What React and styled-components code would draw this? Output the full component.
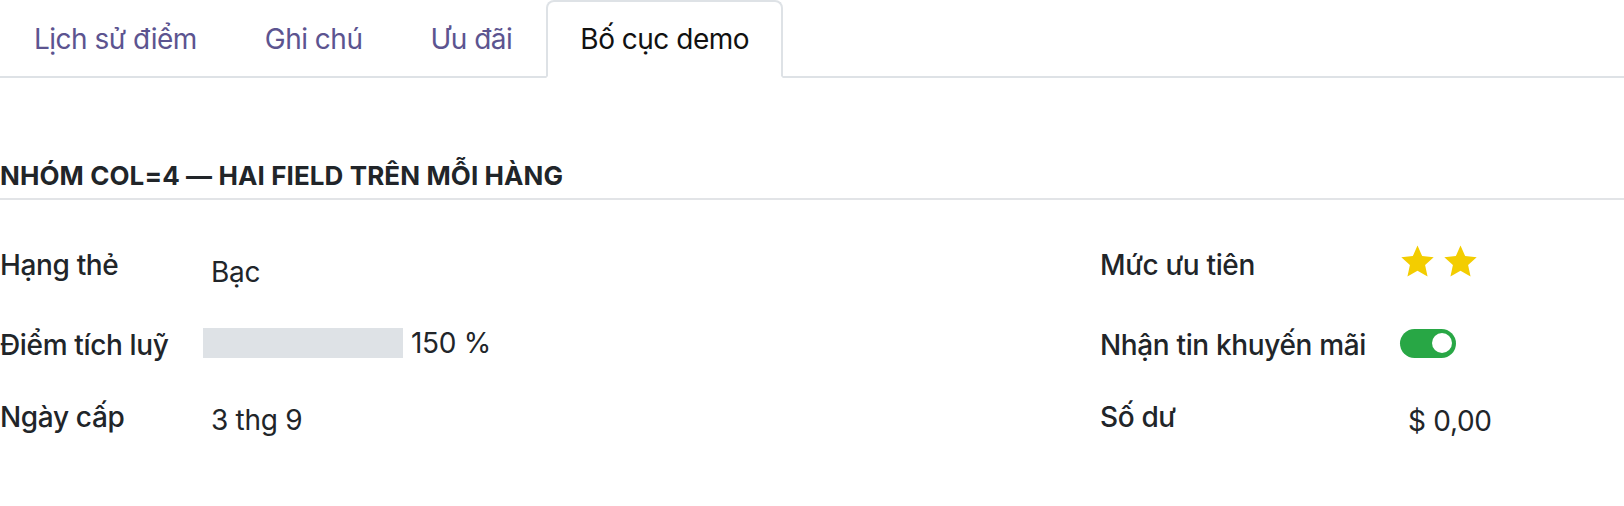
import React from "react";
import styled, { createGlobalStyle } from "styled-components";

const Global = createGlobalStyle`
  html, body { margin: 0; padding: 0; background: #fff; }
  body {
    font-family: Inter, "Noto Sans", Roboto, sans-serif;
    color: #212529;
    -webkit-font-smoothing: antialiased;
  }
`;

const Page = styled.div`
  width: 1624px;
  height: 506px;
  overflow: hidden;
  background: #fff;
`;

const TabBar = styled.nav`
  display: flex;
  align-items: flex-end;
  border-bottom: 2px solid #dee2e6;
  height: 76px;
`;

const Tab = styled.div`
  box-sizing: border-box;
  height: 78px;
  margin-bottom: -2px;
  padding: 16px 32px;
  font-size: 28px;
  line-height: 42px;
  letter-spacing: -0.5px;
  white-space: nowrap;
  border: 2px solid ${(p) => (p.$active ? "#dee2e6" : "transparent")};
  border-bottom-color: ${(p) => (p.$active ? "#fff" : "transparent")};
  border-radius: 8px 8px 0 0;
  background: ${(p) => (p.$active ? "#fff" : "transparent")};
  color: ${(p) => (p.$active ? "#111" : "#5c5490")};
`;

const Sheet = styled.section`
  padding-top: 80px;
`;

const Separator = styled.h2`
  margin: 0;
  font-size: 26px;
  line-height: 36px;
  font-weight: 700;
  letter-spacing: 0.1px;
  text-transform: uppercase;
  color: #212529;
  padding-bottom: 4px;
  border-bottom: 2px solid #e2e4e7;
`;

const Group = styled.div`
  margin-top: 44px;
  display: grid;
  grid-template-columns: 203px 897px 300px 1fr;
  grid-template-rows: 80px 72px 42px;
  align-items: start;
`;

const Label = styled.div`
  font-size: 28px;
  line-height: 42px;
  font-weight: 500;
  letter-spacing: -0.35px;
  color: #212529;
  white-space: nowrap;
`;

const Value = styled.div`
  display: flex;
  align-items: center;
  min-height: 42px;
  margin-top: ${(p) => p.$offset || 0}px;
  font-size: 28px;
  line-height: 42px;
  letter-spacing: -0.3px;
  color: #212529;
  white-space: nowrap;
`;

const Text = styled.span`
  padding-left: 8px;
`;

const Bar = styled.div`
  width: 200px;
  height: 30px;
  background: #dee2e6;
  margin-right: 8px;
`;

const Stars = styled.div`
  display: flex;
  gap: 8px;
`;

const Switch = styled.div`
  box-sizing: border-box;
  width: 56px;
  height: 29px;
  border-radius: 15px;
  background: #28a745;
  display: flex;
  align-items: center;
  justify-content: flex-end;
  padding-right: 4px;
`;

const Knob = styled.span`
  width: 20px;
  height: 20px;
  border-radius: 50%;
  background: #fff;
`;

const Star = () => (
  <svg width="35" height="34" viewBox="0 0 24 23.3">
    <polygon
      fill="#f3cd00"
      points="12,0.4 15.2,7.6 23.1,8.4 17.2,13.7 18.9,21.6 12,17.6 5.1,21.6 6.8,13.7 0.9,8.4 8.8,7.6"
    />
  </svg>
);

export default function App() {
  return (
    <Page>
      <Global />
      <TabBar>
        <Tab>Lịch sử điểm</Tab>
        <Tab>Ghi chú</Tab>
        <Tab>Ưu đãi</Tab>
        <Tab $active>Bố cục demo</Tab>
      </TabBar>
      <Sheet>
        <Separator>Nhóm col=4 — hai field trên mỗi hàng</Separator>
        <Group>
          <Label>Hạng thẻ</Label>
          <Value $offset={7}>
            <Text>Bạc</Text>
          </Value>
          <Label>Mức ưu tiên</Label>
          <Value $offset={-3}>
            <Stars>
              <Star />
              <Star />
            </Stars>
          </Value>

          <Label>Điểm tích luỹ</Label>
          <Value $offset={-2}>
            <Bar />
            <span>150 %</span>
          </Value>
          <Label>Nhận tin khuyến mãi</Label>
          <Value $offset={-2}>
            <Switch>
              <Knob />
            </Switch>
          </Value>

          <Label>Ngày cấp</Label>
          <Value $offset={3}>
            <Text>3 thg 9</Text>
          </Value>
          <Label>Số dư</Label>
          <Value $offset={4}>
            <Text>$ 0,00</Text>
          </Value>
        </Group>
      </Sheet>
    </Page>
  );
}
